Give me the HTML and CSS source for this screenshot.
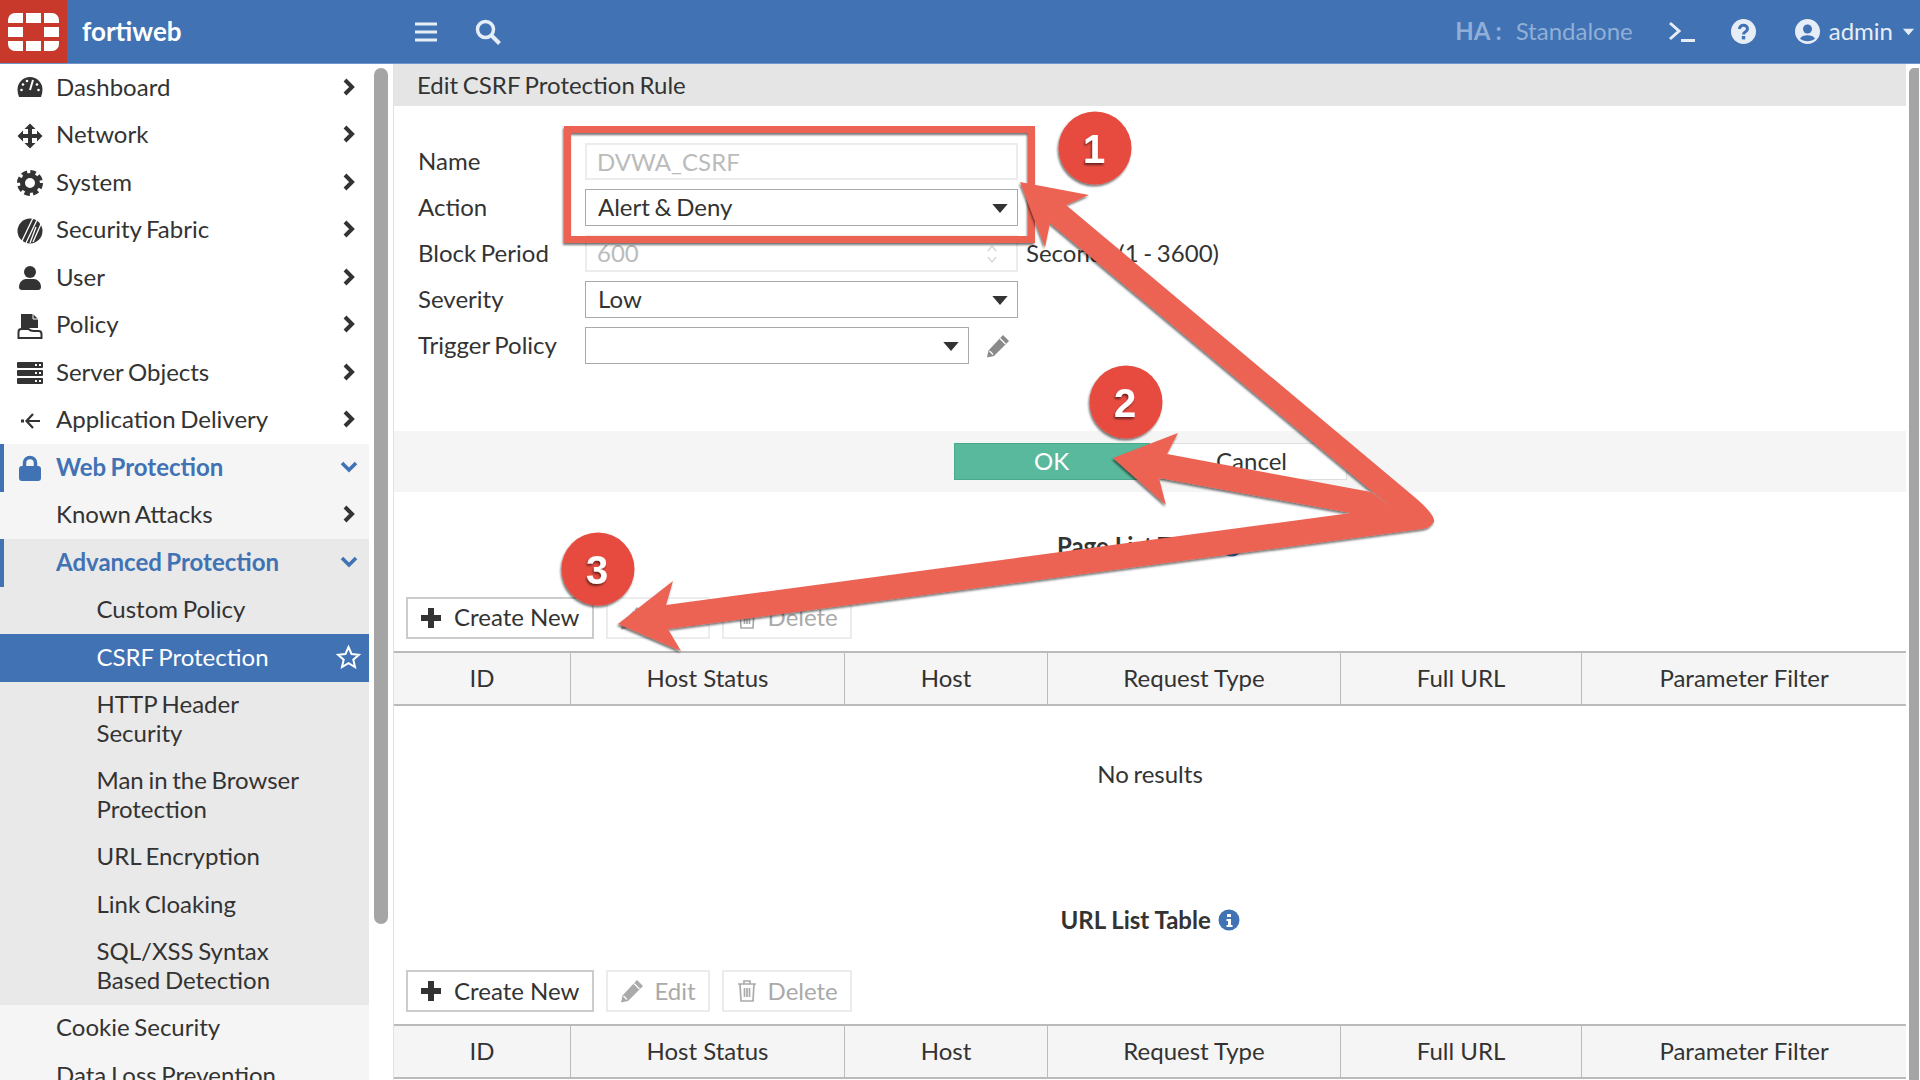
FILE: index.html
```html
<!DOCTYPE html>
<html lang="en">

<head>
    <meta charset="UTF-8">
    <title>fortiweb</title>
    <link rel="stylesheet" href="styles.css">
</head>

<body>
    <svg class="defs">
        <symbol id="chev-r" viewBox="0 0 14 20"><path d="M3 3l7 7-7 7" fill="none" stroke="currentColor" stroke-width="4"/></symbol>
        <symbol id="chev-d" viewBox="0 0 20 14"><path d="M3 3l7 7 7-7" fill="none" stroke="currentColor" stroke-width="3.6"/></symbol>
        <symbol id="caret" viewBox="0 0 16 10"><path d="M1 1h14l-7 8z" fill="currentColor"/></symbol>
        <symbol id="pencil" viewBox="0 0 24 24"><path d="M17 1l6 6-15 15-7 1.500 1.500-7z" fill="currentColor"/><path d="M14 4.500l5.500 5.500M3.500 17l3.500 3.500" stroke="#fff" stroke-width="1.200"/></symbol>
        <symbol id="trash" viewBox="0 0 20 24"><path d="M1 5h18M7 5V2h6v3M3 5l1 17h12l1-17M7.500 9v9M10 9v9M12.500 9v9" fill="none" stroke="currentColor" stroke-width="1.700"/></symbol>
        <symbol id="plus" viewBox="0 0 22 22"><path d="M11 1v20M1 11h20" stroke="currentColor" stroke-width="6"/></symbol>
        <symbol id="info" viewBox="0 0 22 22"><circle cx="11" cy="11" r="10.500" fill="currentColor"/><path d="M9 5h4v3H9zM8.500 10H13v6h1.500v2h-6v-2H10v-4H8.500z" fill="#fff"/></symbol>
    </svg>

    <header class="topbar">
        <div class="logo">
            <svg width="51" height="38" viewBox="0 0 51 38">
                <path d="M0 10V7a7 7 0 0 1 7-7h8v10zM18 0h15v10H18zM36 0h8a7 7 0 0 1 7 7v3H36zM0 14h15v10H0zM36 14h15v10H36zM0 28h15v10H7a7 7 0 0 1-7-7zM18 28h15v10H18zM36 28h15v3a7 7 0 0 1-7 7h-8z" fill="#fff"/>
            </svg>
        </div>
        <span class="brand">fortiweb</span>
        <svg class="tool-icon menu-icon" width="24" height="22" viewBox="0 0 24 22"><path d="M1 3h22M1 11h22M1 19h22" stroke="currentColor" stroke-width="3"/></svg>
        <svg class="tool-icon search-icon" width="26" height="26" viewBox="0 0 26 26"><circle cx="10.500" cy="10.500" r="8" fill="none" stroke="currentColor" stroke-width="3.500"/><path d="M16.500 16.500l8 8" stroke="currentColor" stroke-width="4"/></svg>
        <div class="top-right">
            <span class="ha"><b>HA :</b><span>Standalone</span></span>
            <svg class="term" width="27" height="22" viewBox="0 0 27 22"><path d="M2 2l9 8-9 8" fill="none" stroke="currentColor" stroke-width="3"/><path d="M13 19.500h14" stroke="currentColor" stroke-width="3"/></svg>
            <svg class="help" width="25" height="25" viewBox="0 0 25 25"><circle cx="12.500" cy="12.500" r="12.500" fill="currentColor"/><path d="M8.500 10c0-5 8-5 8 0 0 3-4 2.500-4 5.500" fill="none" stroke="#4072b4" stroke-width="3"/><rect x="10.800" y="17" width="3.400" height="3.400" fill="#4072b4"/></svg>
            <span class="user">
                <svg width="25" height="25" viewBox="0 0 25 25"><circle cx="12.500" cy="12.500" r="12.500" fill="currentColor"/><circle cx="12.500" cy="10" r="4.500" fill="#4072b4"/><path d="M5 19.500c2-4.500 13-4.500 15 0-3.500 3.500-11.500 3.500-15 0z" fill="#4072b4"/></svg>
                admin
                <svg class="user-caret" width="13" height="8"><use href="#caret"/></svg>
            </span>
        </div>
    </header>

    <div class="shell">
        <nav class="sidebar">
            <a class="item">
                <svg class="ic" viewBox="0 0 26 26"><path d="M13 2a12.500 12.500 0 0 0-12.500 12.500c0 2.500.5 5 1.500 7.500h22c1-2.500 1.500-5 1.500-7.500A12.500 12.500 0 0 0 13 2z" fill="currentColor"/><path d="M16 5l-3 10" stroke="#fff" stroke-width="2"/><circle cx="6" cy="9.500" r="1.300" fill="#fff"/><circle cx="10" cy="6" r="1.300" fill="#fff"/><circle cx="20" cy="9.500" r="1.300" fill="#fff"/><circle cx="4.500" cy="15" r="1.300" fill="#fff"/><circle cx="21.500" cy="15" r="1.300" fill="#fff"/></svg>
                <span>Dashboard</span><svg class="chev"><use href="#chev-r"/></svg>
            </a>
            <a class="item">
                <svg class="ic" viewBox="0 0 26 26"><path d="M13 .5l5.500 5.500h-3.500v5h5V7.500l5.500 5.500-5.500 5.500V15h-5v5h3.500L13 25.500 7.500 20H11v-5H6v3.500L.5 13 6 7.500V11h5V6H7.500z" fill="currentColor"/></svg>
                <span>Network</span><svg class="chev"><use href="#chev-r"/></svg>
            </a>
            <a class="item">
                <svg class="ic" viewBox="0 0 26 26"><circle cx="13" cy="13" r="11" fill="none" stroke="currentColor" stroke-width="4" stroke-dasharray="5.500 3.140"/><circle cx="13" cy="13" r="7.500" fill="none" stroke="currentColor" stroke-width="5"/></svg>
                <span>System</span><svg class="chev"><use href="#chev-r"/></svg>
            </a>
            <a class="item">
                <svg class="ic" viewBox="0 0 26 26"><circle cx="13" cy="13" r="12.500" fill="currentColor"/><path d="M16 0L4 25M20 2L9 25M19 9L13 25M24 6L16 24" stroke="#fff" stroke-width="1.300"/></svg>
                <span>Security Fabric</span><svg class="chev"><use href="#chev-r"/></svg>
            </a>
            <a class="item">
                <svg class="ic" viewBox="0 0 26 26"><circle cx="13" cy="7" r="6" fill="currentColor"/><path d="M2 22c0-5 4-8 7-8h8c3 0 7 3 7 8 0 2-1 3-3 3H5c-2 0-3-1-3-3z" fill="currentColor"/></svg>
                <span>User</span><svg class="chev"><use href="#chev-r"/></svg>
            </a>
            <a class="item">
                <svg class="ic" viewBox="0 0 26 26"><path d="M4 1h12l5 5v9H4z" fill="currentColor"/><path d="M16 1v5h5" fill="none" stroke="#fff" stroke-width="1"/><path d="M1.500 25v-6c0-2 1-3 3-3h7c2 2 3 2 5 2h5c2 0 3 1 3 3v4z" fill="#fff" stroke="currentColor" stroke-width="2"/></svg>
                <span>Policy</span><svg class="chev"><use href="#chev-r"/></svg>
            </a>
            <a class="item">
                <svg class="ic" viewBox="0 0 26 26"><rect y="2" width="26" height="6" rx="1" fill="currentColor"/><rect y="10" width="26" height="6" rx="1" fill="currentColor"/><rect y="18" width="26" height="6" rx="1" fill="currentColor"/><path d="M18 5h2M22 5h2M18 13h2M22 13h2M18 21h2M22 21h2" stroke="#fff" stroke-width="2"/></svg>
                <span>Server Objects</span><svg class="chev"><use href="#chev-r"/></svg>
            </a>
            <a class="item">
                <svg class="ic" viewBox="0 0 26 26"><rect x="4" y="11.500" width="3" height="3" fill="currentColor"/><path d="M16 6l-6.500 7 6.500 7M10 13h13" fill="none" stroke="currentColor" stroke-width="2.200"/></svg>
                <span>Application Delivery</span><svg class="chev"><use href="#chev-r"/></svg>
            </a>
            <a class="item open accent group-light">
                <svg class="ic" viewBox="0 0 26 26"><path d="M7.500 12V8a5.500 5.500 0 0 1 11 0v4" fill="none" stroke="currentColor" stroke-width="3.500"/><rect x="2" y="11" width="22" height="15" rx="3" fill="currentColor"/></svg>
                <span>Web Protection</span><svg class="chev-d"><use href="#chev-d"/></svg>
            </a>
            <a class="item group-light">
                <span>Known Attacks</span><svg class="chev"><use href="#chev-r"/></svg>
            </a>
            <a class="item open accent group-dark">
                <span>Advanced Protection</span><svg class="chev-d"><use href="#chev-d"/></svg>
            </a>
            <a class="item sub group-dark"><span>Custom Policy</span></a>
            <a class="item sub current">
                <span>CSRF Protection</span>
                <svg class="star" width="25" height="24" viewBox="0 0 25 24"><path d="M12.500 2l3 7 7.500.7-5.700 5 1.700 7.300-6.500-3.900L6 22l1.700-7.300-5.700-5L9.500 9z" fill="none" stroke="currentColor" stroke-width="2"/></svg>
            </a>
            <a class="item sub group-dark"><span>HTTP Header<br>Security</span></a>
            <a class="item sub group-dark"><span>Man in the Browser<br>Protection</span></a>
            <a class="item sub group-dark"><span>URL Encryption</span></a>
            <a class="item sub group-dark"><span>Link Cloaking</span></a>
            <a class="item sub group-dark"><span>SQL/XSS Syntax<br>Based Detection</span></a>
            <a class="item group-light"><span>Cookie Security</span></a>
            <a class="item group-light"><span>Data Loss Prevention</span></a>
        </nav>
        <div class="nav-scroll"><div class="nav-thumb"></div></div>

        <main class="content">
            <h1 class="page-title">Edit CSRF Protection Rule</h1>
            <form class="rule-form">
                <div class="row">
                    <label>Name</label>
                    <input class="field" disabled value="DVWA_CSRF">
                </div>
                <div class="row">
                    <label>Action</label>
                    <div class="field select">Alert &amp; Deny<svg class="sel-caret"><use href="#caret"/></svg></div>
                </div>
                <div class="row">
                    <label>Block Period</label>
                    <div class="field number">600
                        <svg class="spin" width="12" height="22" viewBox="0 0 12 22"><path d="M2 8l4-5 4 5M2 14l4 5 4-5" fill="none" stroke="#d5d5d5" stroke-width="1.300"/></svg>
                    </div>
                    <span class="unit">Seconds (1 - 3600)</span>
                </div>
                <div class="row">
                    <label>Severity</label>
                    <div class="field select">Low<svg class="sel-caret"><use href="#caret"/></svg></div>
                </div>
                <div class="row">
                    <label>Trigger Policy</label>
                    <div class="field select short"><svg class="sel-caret"><use href="#caret"/></svg></div>
                    <svg class="edit-pen" width="24" height="24"><use href="#pencil"/></svg>
                </div>
            </form>
            <div class="form-actions">
                <button class="act ok" type="button">OK</button>
                <button class="act" type="button">Cancel</button>
            </div>

            <section class="list-section">
                <h2 class="list-title">Page List Table <svg class="info" width="22" height="22"><use href="#info"/></svg></h2>
                <div class="toolbar">
                    <button class="tool" type="button"><svg width="22" height="22"><use href="#plus"/></svg>Create New</button>
                    <button class="tool off" type="button"><svg width="24" height="24"><use href="#pencil"/></svg>Edit</button>
                    <button class="tool off" type="button"><svg width="22" height="24"><use href="#trash"/></svg>Delete</button>
                </div>
                <div class="thead">
                    <div>ID</div><div>Host Status</div><div>Host</div><div>Request Type</div><div>Full URL</div><div>Parameter Filter</div>
                </div>
                <div class="empty">No results</div>
            </section>

            <section class="list-section">
                <h2 class="list-title">URL List Table <svg class="info" width="22" height="22"><use href="#info"/></svg></h2>
                <div class="toolbar">
                    <button class="tool" type="button"><svg width="22" height="22"><use href="#plus"/></svg>Create New</button>
                    <button class="tool off" type="button"><svg width="24" height="24"><use href="#pencil"/></svg>Edit</button>
                    <button class="tool off" type="button"><svg width="22" height="24"><use href="#trash"/></svg>Delete</button>
                </div>
                <div class="thead">
                    <div>ID</div><div>Host Status</div><div>Host</div><div>Request Type</div><div>Full URL</div><div>Parameter Filter</div>
                </div>
            </section>
        </main>
        <div class="main-thumb"></div>
    </div>

    <!-- annotation drawn on top of the screenshot -->
    <svg class="markup" width="1920" height="1080" viewBox="0 0 1920 1080">
        <defs>
            <filter id="drop" x="-10%" y="-10%" width="120%" height="120%">
                <feDropShadow dx="-1" dy="2" stdDeviation="1.200" flood-color="#000" flood-opacity=".55"/>
            </filter>
        </defs>
        <rect class="mark-box" x="567.500" y="129.500" width="464" height="110" filter="url(#drop)"/>
        <path class="mark-arrow" filter="url(#drop)" d="M1020 182L1089 195L1066 205L1418 500Q1440 520 1432 524Q1430 528 1422 529L668 629L681 651L618 624L673 581L666 605L1351 513L1159 478L1166 505L1113 458L1178 433L1167 454L1371 492L1391 507L1050 223L1045 247Z"/>
        <g filter="url(#drop)">
            <circle class="mark-dot" cx="1095" cy="148" r="36.500"/>
            <circle class="mark-dot" cx="1126" cy="402" r="36.500"/>
            <circle class="mark-dot" cx="598" cy="569" r="36.500"/>
        </g>
        <g class="mark-num" filter="url(#drop)">
            <text x="1094" y="163">1</text>
            <text x="1125" y="417">2</text>
            <text x="597" y="584">3</text>
        </g>
    </svg>
</body>

</html>
```

FILE: styles.css
```css
html,
body {
    margin: 0;
    padding: 0;
    height: 100%;
    overflow: hidden;
}

* {
    box-sizing: border-box;
}

body {
    font-family: "Lato", "Liberation Sans", sans-serif;
    font-size: 24px;
    line-height: 28.5px;
    word-spacing: -1.5px;
    color: #333;
    background: #fff;
    position: relative;
}

.defs {
    display: none;
}

/* top bar */
.topbar {
    display: flex;
    align-items: center;
    height: 64px;
    background: #4072b4;
    border-bottom: 1px solid #6f97cb;
    color: #e6edf6;
}

.logo {
    width: 67px;
    height: 63px;
    background: #c8392b;
    display: flex;
    align-items: center;
    justify-content: center;
}

.brand {
    margin-left: 15px;
    width: 332px;
    font-size: 26px;
    font-weight: 700;
    color: #fff;
}

.menu-icon {
    margin-right: 37px;
}

.top-right {
    margin-left: auto;
    display: flex;
    align-items: center;
}

.ha {
    display: flex;
    gap: 14px;
    word-spacing: 0;
    color: #91afd6;
    margin-right: 35px;
}

.term {
    margin-right: 36px;
}

.help {
    margin-right: 39px;
}

.user {
    display: flex;
    align-items: center;
    gap: 9px;
    padding-right: 5px;
}

.user-caret {
    margin-left: 0;
}

/* page */
.shell {
    display: flex;
    height: 1016px;
    overflow: hidden;
}

.sidebar {
    width: 369px;
    flex: none;
}

.item {
    display: flex;
    align-items: center;
    min-height: 47.5px;
    padding: 8.5px 0 10.5px 56px;
    position: relative;
}

.item > span {
    flex: 1;
}

.ic {
    position: absolute;
    left: 17px;
    top: 11px;
    width: 26px;
    height: 26px;
    color: #333;
}

.chev {
    width: 14px;
    height: 20px;
    margin-right: 13px;
}

.chev-d {
    width: 20px;
    height: 14px;
    margin-right: 10px;
}

.sub {
    padding-left: 96.5px;
}

.group-light {
    background: #f5f5f5;
}

.group-dark {
    background: #e9e9e9;
}

.open {
    color: #4072b4;
    font-weight: 700;
}

.open .ic {
    color: #4072b4;
}

.accent {
    border-left: 4px solid #4072b4;
    padding-left: 52px;
}

.open.accent .ic {
    left: 13px;
}

.current {
    background: #4072b4;
    color: #fff;
}

.star {
    margin-right: 8px;
}

.nav-scroll {
    width: 24px;
    flex: none;
    padding: 4px 5px 0;
}

.nav-thumb {
    width: 14px;
    height: 856px;
    background: #a5a5a5;
    border-radius: 7px;
}

.content {
    width: 1513px;
    flex: none;
    border-left: 1px solid #e2e2e2;
}

.main-thumb {
    width: 10px;
    height: 1016px;
    margin: 4px 0 0 3px;
    background: #a5a5a5;
    border-radius: 5px 0 0 0;
}

.page-title {
    margin: 0;
    height: 42px;
    padding: 7px 23px 0;
    background: #e5e5e5;
    font-size: 24px;
    font-weight: 400;
}

/* form */
.rule-form {
    height: 325px;
    padding: 37px 24px 0;
}

.row {
    display: flex;
    align-items: center;
    height: 37px;
    margin-bottom: 9px;
}

.row label {
    width: 167px;
}

.field {
    width: 433px;
    height: 37px;
    border: 1px solid #aaa;
    padding: 0 12px;
    font: inherit;
    word-spacing: inherit;
    background: #fff;
    display: flex;
    align-items: center;
    position: relative;
}

input.field,
.number {
    border: 2px solid #ececec;
    color: #bbb;
    padding: 0 10px;
}

.sel-caret {
    position: absolute;
    right: 8px;
    top: 13px;
    width: 18px;
    height: 11px;
}

.short {
    width: 384px;
}

.spin {
    position: absolute;
    right: 18px;
    top: 6px;
}

.unit {
    margin-left: 8px;
}

.edit-pen {
    margin-left: 17px;
    color: #8a8a8a;
}

.form-actions {
    display: flex;
    justify-content: center;
    gap: 7px;
    align-items: center;
    height: 61px;
    background: #f5f5f5;
}

.act {
    width: 190px;
    height: 37px;
    font: inherit;
    color: #333;
    background: #fff;
    border: 1px solid #ddd;
    padding: 0;
}

.act.ok {
    width: 196px;
    background: #59b99c;
    border-color: #4aa88c;
    color: #fff;
}

/* list tables */
.list-section {
    padding-top: 40px;
}

.list-title {
    margin: 0 0 36px;
    font-size: 24px;
    font-weight: 700;
    word-spacing: 0;
    text-align: center;
}

.info {
    color: #4072b4;
    vertical-align: -2px;
    margin-left: 1px;
}

.toolbar {
    display: flex;
    gap: 12px;
    padding-left: 12px;
    margin-bottom: 12px;
}

.tool {
    height: 42px;
    display: flex;
    align-items: center;
    gap: 12px;
    padding: 0 13px 0 12px;
    font: inherit;
    word-spacing: 0;
    color: #333;
    background: #fff;
    border: 2px solid #ccc;
}

.tool.off {
    gap: 10px;
    padding: 0 12px;
    color: #aaa;
    border-color: #ececec;
}

.thead {
    display: grid;
    grid-template-columns: 176px 274px 203px 293px 241px 1fr;
    height: 55px;
    background: #f5f5f5;
    border-top: 2px solid #bbb;
    border-bottom: 2px solid #bbb;
    word-spacing: 0;
    text-align: center;
}

.thead > div {
    display: flex;
    align-items: center;
    justify-content: center;
    border-left: 1px solid #bbb;
}

.thead > div:first-child {
    border-left: 0;
}

.empty {
    height: 160px;
    padding-top: 54px;
    text-align: center;
}

/* annotation */
.markup {
    position: absolute;
    left: 0;
    top: 0;
    pointer-events: none;
}

.mark-box {
    fill: none;
    stroke: #ec6353;
    stroke-width: 7;
}

.mark-arrow {
    fill: #ec6353;
}

.mark-dot {
    fill: #e74c3f;
}

.mark-num {
    font-family: "Liberation Sans", sans-serif;
    font-size: 40px;
    font-weight: 700;
    fill: #fff;
    text-anchor: middle;
}
```
